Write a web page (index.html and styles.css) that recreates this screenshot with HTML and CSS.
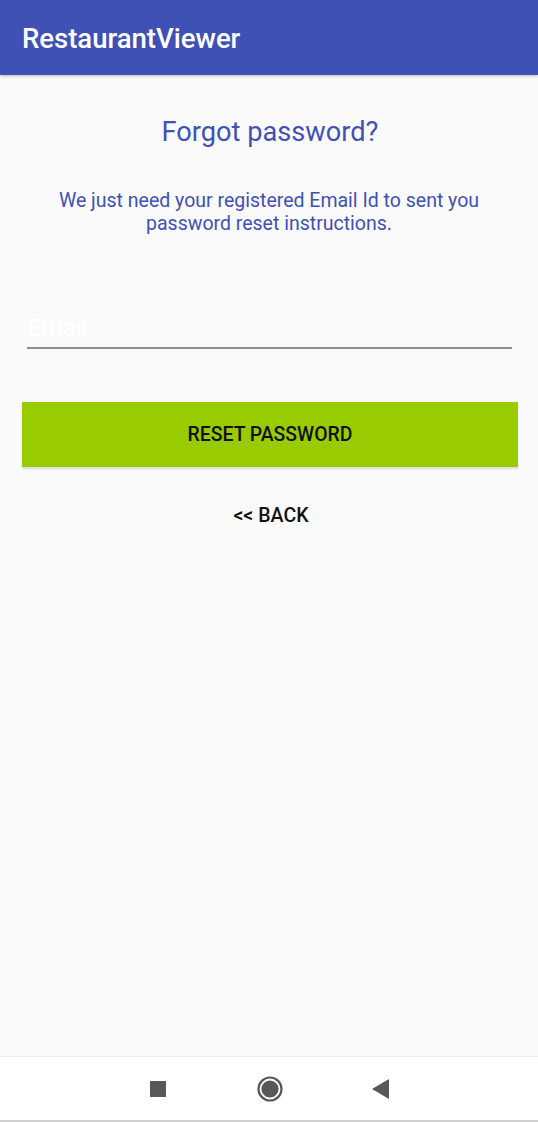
FILE: index.html
```html
<!DOCTYPE html>
<html lang="en">
<head>
<meta charset="utf-8">
<title>RestaurantViewer</title>
<link rel="stylesheet" href="styles.css">
</head>
<body>
<div class="screen">
  <header class="appbar">
    <h1 class="appbar-title">RestaurantViewer</h1>
  </header>
  <main class="content">
    <h2 class="title">Forgot password?</h2>
    <p class="subtitle">We just need your registered Email Id to sent you<br>password reset instructions.</p>
    <div class="field">
      <input class="field-input" type="email" placeholder="Email">
    </div>
    <button class="btn-reset" type="button">RESET PASSWORD</button>
    <button class="btn-back" type="button">&lt;&lt; BACK</button>
  </main>
  <nav class="navbar">
    <svg class="nav-icon" width="16" height="16" viewBox="0 0 16 16"><rect x="0" y="0" width="16" height="16" fill="#585858"/></svg>
    <svg class="nav-icon" width="26" height="26" viewBox="0 0 26 26"><circle cx="13" cy="13" r="11.5" fill="none" stroke="#585858" stroke-width="2.2"/><circle cx="13" cy="13" r="8.6" fill="#585858"/></svg>
    <svg class="nav-icon" width="17" height="20" viewBox="0 0 17 20"><polygon points="17,0 17,20 0,10" fill="#585858"/></svg>
  </nav>
</div>
</body>
</html>
```

FILE: styles.css
```css
html, body {
  margin: 0;
  padding: 0;
  background: #fafafa;
}

body {
  font-family: Roboto, "Noto Sans", "Liberation Sans", sans-serif;
}

.screen {
  width: 538px;
  height: 1122px;
  display: flex;
  flex-direction: column;
  overflow: hidden;
}

.appbar {
  height: 75px;
  flex: 0 0 75px;
  background: #3f51b5;
  box-sizing: border-box;
  padding: 22px 0 0 22px;
  box-shadow: 0 1px 3px rgba(0, 0, 0, 0.25);
  position: relative;
  z-index: 1;
}

.appbar-title {
  margin: 0;
  font-size: 27.5px;
  font-weight: 500;
  color: #ffffff;
  line-height: 34px;
}

.content {
  flex: 1;
  display: flex;
  flex-direction: column;
  align-items: stretch;
}

.title {
  margin: 41px 0 0 0;
  font-size: 27.2px;
  font-weight: 400;
  color: #3f51b5;
  text-align: center;
  line-height: 32px;
  padding-left: 2px;
}

.subtitle {
  margin: 41px 0 0 0;
  font-size: 19.5px;
  font-weight: 400;
  color: #3f51b5;
  text-align: center;
  line-height: 23px;
}

.field {
  margin: 77px 26px 0 27px;
}

.field-input {
  display: block;
  width: 100%;
  box-sizing: border-box;
  border: none;
  border-bottom: 2px solid #8c8c8c;
  background: transparent;
  outline: none;
  font-family: inherit;
  font-size: 24px;
  line-height: 28px;
  padding: 2px 0 5px 1px;
  margin: 0;
  color: #222;
}

.field-input::placeholder {
  color: #ffffff;
  opacity: 1;
}

.btn-reset {
  margin: 53px 20px 0 22px;
  height: 65px;
  border: none;
  background: #99cc00;
  color: #111;
  font-family: inherit;
  font-size: 19.4px;
  font-weight: 500;
  box-shadow: 0 2px 2px rgba(0, 0, 0, 0.12);
  padding: 0;
}

.btn-back {
  align-self: center;
  margin: 38px 0 0 4px;
  border: none;
  background: transparent;
  color: #111;
  font-family: inherit;
  font-size: 19.6px;
  font-weight: 500;
  padding: 0;
  line-height: 22px;
}

.navbar {
  flex: 0 0 66px;
  height: 66px;
  box-sizing: border-box;
  background: #ffffff;
  border-top: 1px solid #ececec;
  border-bottom: 2px solid #cfcfcf;
  display: flex;
  align-items: center;
  justify-content: center;
}

.nav-icon {
  display: block;
}

.nav-icon:nth-child(1) {
  margin-right: 91px;
}

.nav-icon:nth-child(3) {
  margin-left: 89px;
}
```
